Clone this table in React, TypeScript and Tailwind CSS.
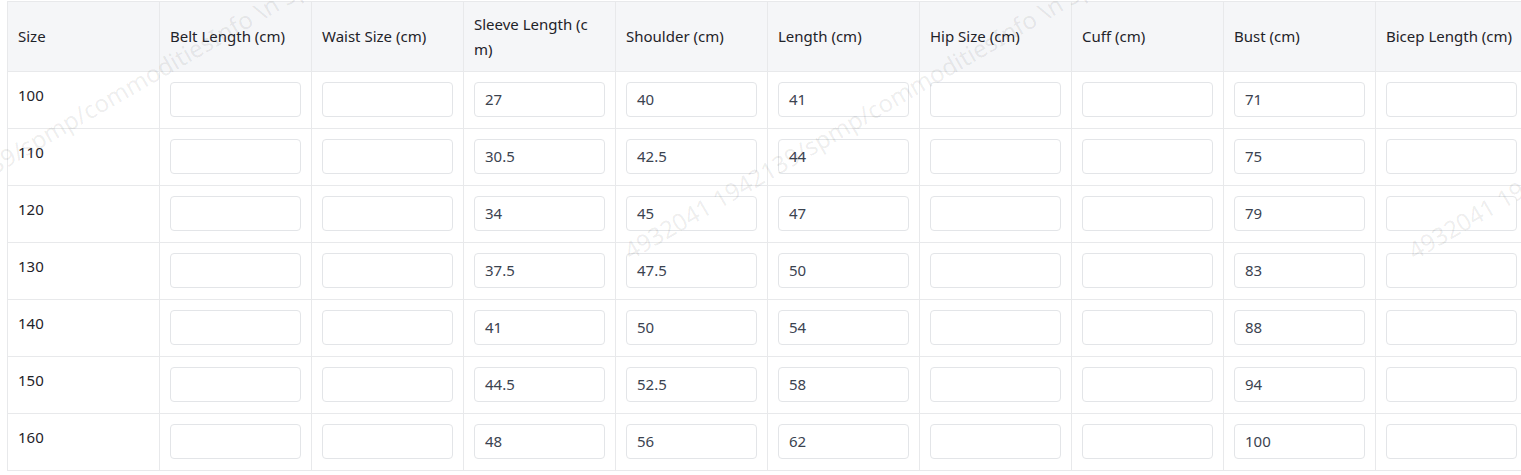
import React from "react";

const headers = [
  "Size",
  "Belt Length (cm)",
  "Waist Size (cm)",
  "Sleeve Length (cm)",
  "Shoulder (cm)",
  "Length (cm)",
  "Hip Size (cm)",
  "Cuff (cm)",
  "Bust (cm)",
  "Bicep Length (cm)",
];

type Row = { size: string; vals: string[] };

const rows: Row[] = [
  { size: "100", vals: ["", "", "27", "40", "41", "", "", "71", ""] },
  { size: "110", vals: ["", "", "30.5", "42.5", "44", "", "", "75", ""] },
  { size: "120", vals: ["", "", "34", "45", "47", "", "", "79", ""] },
  { size: "130", vals: ["", "", "37.5", "47.5", "50", "", "", "83", ""] },
  { size: "140", vals: ["", "", "41", "50", "54", "", "", "88", ""] },
  { size: "150", vals: ["", "", "44.5", "52.5", "58", "", "", "94", ""] },
  { size: "160", vals: ["", "", "48", "56", "62", "", "", "100", ""] },
];

const WM = "4932041 1942139/spmp/commoditiesInfo \\n Spu";

export default function App() {
  return (
    <div
      className="relative w-[1521px] h-[475px] overflow-hidden bg-white"
      style={{ fontFamily: '"Noto Sans", "Open Sans", Arial, sans-serif' }}
    >
      <div className="ml-[7px] mt-[1px] w-[1520px]">
        {/* header */}
        <div className="flex w-max border-t border-l border-b border-[#e8e9eb] bg-[#f5f6f8]">
          {headers.map((h) => (
            <div
              key={h}
              className="w-[152px] h-[69px] shrink-0 border-r border-[#e8e9eb] pl-[10px] pr-[11px] flex items-center text-[15px] leading-[25px] text-[#1f2329] break-all"
            >
              <span>{h}</span>
            </div>
          ))}
        </div>
        {/* body */}
        {rows.map((r) => (
          <div key={r.size} className="flex w-max border-l border-b border-[#e8e9eb]">
            <div className="w-[152px] shrink-0 border-r border-[#e8e9eb] px-[10px] pt-[11px] h-[56px] text-[15px] leading-[25px] text-[#1f2329]">
              {r.size}
            </div>
            {r.vals.map((v, i) => (
              <div
                key={i}
                className="w-[152px] shrink-0 border-r border-[#e8e9eb] pl-[10px] pr-[10px] pt-[10px] h-[56px]"
              >
                <div className="h-[35px] w-full rounded-[4px] border border-[#e3e5e8] bg-white flex items-center px-[10px] text-[15px] text-[#3b4350]">
                  {v}
                </div>
              </div>
            ))}
          </div>
        ))}
      </div>

      {/* watermark overlay */}
      <div className="pointer-events-none absolute inset-0">
        {[-152, 632, 1416].map((x) => (
          <span
            key={x}
            className="absolute whitespace-pre text-[24px] leading-none text-[rgba(0,0,0,0.08)]"
            style={{
              left: x,
              top: 239,
              transform: "rotate(-30deg)",
              transformOrigin: "0 100%",
            }}
          >
            {WM}
          </span>
        ))}
      </div>
    </div>
  );
}
